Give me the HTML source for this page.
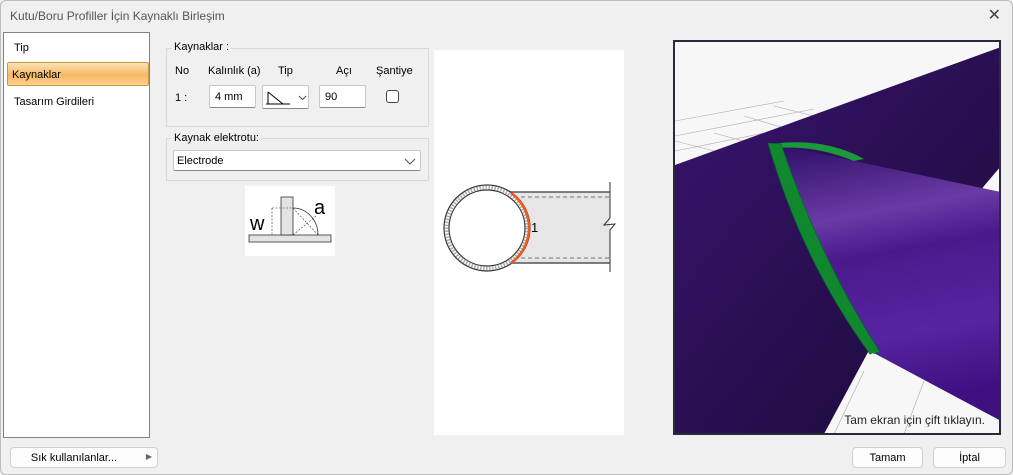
<!DOCTYPE html>
<html><head><meta charset="utf-8"><style>
*{box-sizing:border-box;margin:0;padding:0}
body{width:1013px;height:475px;background:#f0f0f0;font-family:"Liberation Sans",sans-serif;font-size:11px;color:#000;position:relative;overflow:hidden}
.abs{position:absolute}
.win{position:absolute;left:0;top:0;width:1013px;height:475px;border:1px solid #bdbdbd;border-radius:6px;background:#f0f0f0}
.title{left:10px;top:9px;font-size:12px;color:#555}
.close{right:12px;top:5px;font-size:16px;color:#444}
.left{left:3px;top:32px;width:147px;height:406px;background:#fff;border:1px solid #828282}
.item{position:absolute;left:10px;font-size:11px}
.sel{position:absolute;left:3px;top:29px;width:142px;height:24px;border:1px solid #c79a4a;border-radius:2px;background:linear-gradient(#fde2b4,#f8b866 55%,#fcd08c)}
.grp{border:1px solid #d9d9d9;}
.input{background:#fff;border:1px solid #c8c8c8;border-bottom-color:#888;border-radius:2px}
.btn{background:#fdfdfd;border:1px solid #cfcfcf;border-radius:4px;text-align:center;font-size:11px}
</style></head><body>
<div class="win"></div>
<div class="abs title">Kutu/Boru Profiller İçin Kaynaklı Birleşim</div>
<div class="abs close">✕</div>
<div class="abs left">
  <div class="item" style="top:9px">Tip</div>
  <div class="sel"></div>
  <div class="item" style="top:36px;left:8px">Kaynaklar</div>
  <div class="item" style="top:63px">Tasarım Girdileri</div>
</div>
<div class="abs grp" style="left:166px;top:48px;width:263px;height:79px"></div>
<div class="abs" style="left:172px;top:41px;background:#f0f0f0;padding:0 2px">Kaynaklar :</div>
<div class="abs" style="left:175px;top:65px">No</div>
<div class="abs" style="left:208px;top:65px">Kalınlık (a)</div>
<div class="abs" style="left:278px;top:65px">Tip</div>
<div class="abs" style="left:336px;top:65px">Açı</div>
<div class="abs" style="left:376px;top:65px">Şantiye</div>
<div class="abs" style="left:175px;top:92px">1 :</div>
<div class="abs input" style="left:209px;top:85px;width:47px;height:23px;padding:5px 0 0 5px">4 mm</div>
<div class="abs input" style="left:262px;top:85px;width:47px;height:24px">
<svg width="47" height="24" class="abs" style="left:0;top:0"><path d="M3 18H27M5 18V6M5 6L20 18" stroke="#000" stroke-width="1" fill="none"/><path d="M36 10l3.5 3.5L43 10" stroke="#555" fill="none"/></svg></div>
<div class="abs input" style="left:319px;top:85px;width:47px;height:23px;padding:5px 0 0 5px">90</div>
<div class="abs" style="left:386px;top:90px;width:13px;height:13px;border:1px solid #444;border-radius:3px;background:#fff"></div>
<div class="abs grp" style="left:166px;top:138px;width:263px;height:43px"></div>
<div class="abs" style="left:172px;top:132px;background:#f0f0f0;padding:0 2px">Kaynak elektrotu:</div>
<div class="abs input" style="left:173px;top:150px;width:248px;height:21px;padding:4px 0 0 3px">Electrode
<svg width="12" height="8" class="abs" style="right:4px;top:7px"><path d="M1 1l5 5l5-5" stroke="#555" fill="none"/></svg></div>
<svg class="abs" style="left:245px;top:186px" width="90" height="70">
<rect width="90" height="70" fill="#fff"/>
<rect x="4" y="49" width="82" height="7" fill="#e3e3e3" stroke="#333" stroke-width=".8"/>
<rect x="36" y="11" width="12" height="38" fill="#e3e3e3" stroke="#333" stroke-width=".8"/>
<path d="M48 22A25 27 0 0 1 73 49" stroke="#333" fill="none" stroke-width=".8"/>
<path d="M48 49L71 30M48 22L73 49" stroke="#333" fill="none" stroke-width=".6" stroke-dasharray="2 1.5"/>
<path d="M27 22V49M27 22H48" stroke="#333" stroke-width=".6" stroke-dasharray="2 1.5"/>
<text x="5" y="44" font-size="20" font-family="Liberation Sans">w</text>
<text x="69" y="28" font-size="20" font-family="Liberation Sans">a</text>
</svg>
<div class="abs" style="left:434px;top:50px;width:190px;height:385px;background:#fff"></div>
<svg class="abs" style="left:434px;top:160px" width="196" height="120">
<rect x="73" y="32" width="103" height="71" fill="#e6e6e6"/>
<path d="M73 32H176M73 103H176" stroke="#555" stroke-width="1.5"/>
<path d="M80 37H176M80 98H176" stroke="#777" stroke-dasharray="4 3"/>
<path d="M176 22V58L170 65L181 64L176 70V112" stroke="#333" fill="none" stroke-width="1"/>
<circle cx="53" cy="68" r="43" fill="#fff" stroke="#333" stroke-width="1.2"/>
<circle cx="53" cy="68" r="38" fill="#fff" stroke="#333" stroke-width="1.2"/>
<circle cx="53" cy="68" r="40.5" fill="none" stroke="#aaa" stroke-width="3.5" stroke-dasharray="1.5 1.5"/>
<path d="M77 33A43 43 0 0 1 77 103" stroke="#f05a1a" stroke-width="2.5" fill="none"/>
<text x="97" y="72" font-size="13" font-family="Liberation Sans">1</text>
</svg>
<div class="abs" style="left:673px;top:40px;width:328px;height:395px;border:2px solid #2a2a3a;background:#f7f7f7;overflow:hidden">
<svg width="326" height="393" style="position:absolute;left:-1px;top:-1px">
<g stroke="#aaa" stroke-width=".6" fill="none"><path d="M1 80L110 60M1 95L140 68M1 110L160 78M1 126L170 90M40 92L160 125M70 75L170 105M100 65L160 80M1 100L60 115"/></g>
<defs><linearGradient id="g1" x1="0" y1="0" x2="1" y2="1"><stop offset="0" stop-color="#3a1470"/><stop offset="1" stop-color="#1a0a35"/></linearGradient>
<linearGradient id="g2" x1="0" y1="0" x2="0.15" y2="1"><stop offset="0" stop-color="#2e0f65"/><stop offset=".3" stop-color="#6a3aa6"/><stop offset=".45" stop-color="#4a1a8c"/><stop offset=".75" stop-color="#5624a0"/><stop offset="1" stop-color="#3e1080"/></linearGradient></defs>
<polygon points="1,124 327,6 327,125 310,145 200,300 150,393 1,393" fill="url(#g1)"/>
<path d="M104,104 L327,151 L327,380 L196,310 Q142,215 104,104Z" fill="url(#g2)"/>
<path d="M97,103 Q150,96 190,118 L180,120 Q140,104 104,107 Z" fill="#1a9a3a"/>
<path d="M94,102 L107,103 Q146,218 206,311 L196,313 Q128,220 94,102Z" fill="#11882e" stroke="#063" stroke-width=".8"/>
<polygon points="150,393 198,312 327,380 327,393" fill="#f7f7f7"/>
<path d="M160,393L190,330M230,393L250,340" stroke="#aaa" stroke-width=".6"/>
</svg>
<div class="abs" style="right:14px;bottom:6px;font-size:12px;color:#222">Tam ekran için çift tıklayın.</div>
</div>
<div class="abs btn" style="left:10px;top:447px;width:148px;height:21px;padding-top:4px;padding-right:20px">Sık kullanılanlar...<span style="position:absolute;right:5px;top:4px;font-size:8px;color:#666">▶</span></div>
<div class="abs btn" style="left:852px;top:447px;width:71px;height:21px;padding-top:4px">Tamam</div>
<div class="abs btn" style="left:933px;top:447px;width:73px;height:21px;padding-top:4px">İptal</div>
</body></html>
